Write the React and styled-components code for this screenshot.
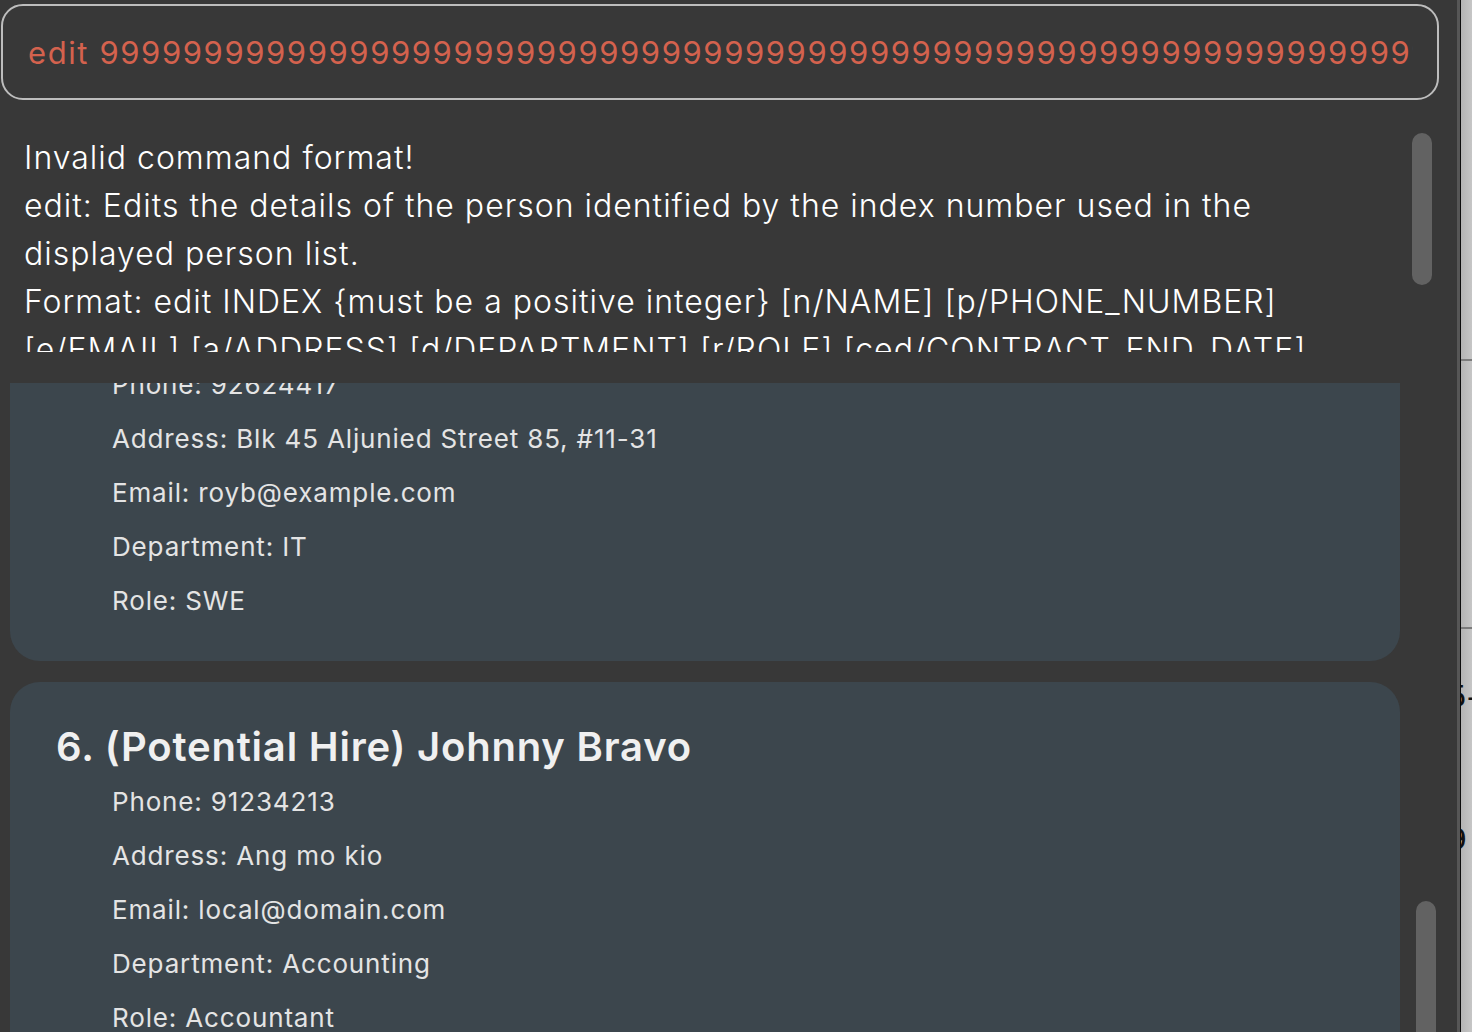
import { useEffect, useRef } from "react";
import styled, { createGlobalStyle } from "styled-components";

const GlobalStyle = createGlobalStyle`
  html, body {
    margin: 0;
    padding: 0;
    background: #383838;
    overflow: hidden;
  }
  * {
    box-sizing: border-box;
  }
`;

const Screen = styled.div`
  display: flex;
  width: 1472px;
  height: 1032px;
  overflow: hidden;
  font-family: "Inter", "Noto Sans", sans-serif;
`;

const Main = styled.div`
  width: 1460px;
  flex-shrink: 0;
  display: flex;
  flex-direction: column;
  background: #383838;
  border-right: 3px solid #565656;
`;

const CommandBox = styled.div`
  margin: 4px 18px 0 1px;
  height: 96px;
  border: 2px solid #bdbdbd;
  border-radius: 22px;
  padding: 0 24px 0 25px;
  display: flex;
  align-items: center;
  overflow: hidden;
`;

const CommandText = styled.div`
  color: #d4624e;
  font-size: 31px;
  letter-spacing: 1.6px;
  white-space: nowrap;
  overflow: hidden;
  width: 100%;
`;

const ResultWrap = styled.div`
  position: relative;
  margin-top: 34px;
  height: 218px;
  padding-left: 24px;
  padding-right: 60px;
`;

const ResultText = styled.div`
  height: 218px;
  overflow: hidden;
  color: #ffffff;
  font-size: 32px;
  font-weight: 300;
  letter-spacing: 1px;
  line-height: 48px;
`;

const Thumb = styled.div`
  position: absolute;
  width: 20px;
  border-radius: 10px;
  background: #626262;
  top: ${({ $top }) => $top}px;
  left: ${({ $left }) => $left}px;
  height: ${({ $height }) => $height}px;
`;

const ListWrap = styled.div`
  position: relative;
  margin-top: 31px;
  flex: 1;
  min-height: 0;
`;

const ListScroll = styled.div`
  height: 100%;
  overflow-y: scroll;
  padding: 0 57px 0 10px;
  scrollbar-width: none;
  &::-webkit-scrollbar {
    display: none;
  }
`;

const CardList = styled.div`
  display: flex;
  flex-direction: column;
  gap: 21px;
  padding-bottom: 21px;
`;

const Card = styled.div`
  background: #3c464d;
  border-radius: 30px;
  padding: 40px 46px 33px;
`;

const Title = styled.div`
  color: #f0f0f0;
  font-size: 40px;
  font-weight: 600;
  letter-spacing: 0.8px;
  line-height: 50px;
  margin-bottom: 3px;
`;

const Field = styled.div`
  color: #e4e4e4;
  font-size: 26px;
  letter-spacing: 0.85px;
  line-height: 54px;
  padding-left: 56px;
`;

const SidePanel = styled.div`
  flex: 1;
  position: relative;
  border-left: 1px solid #0d0d0d;
  background: linear-gradient(90deg, #b4b4b4, #c6c6c6);
  overflow: hidden;
  display: flex;
  flex-direction: column;
`;

const SideRule = styled.div`
  height: 2px;
  background: #7c7c7c;
  margin-top: ${({ $top }) => $top}px;
`;

const SideGlyph = styled.div`
  font-family: "DejaVu Sans", sans-serif;
  font-size: 30px;
  color: #111;
  line-height: 40px;
  margin-left: -13px;
  margin-top: ${({ $top }) => $top}px;
  white-space: nowrap;
`;

const people = [
  {
    title: "5. Roy Balakrishnan",
    phone: "92624417",
    address: "Blk 45 Aljunied Street 85, #11-31",
    email: "royb@example.com",
    department: "IT",
    role: "SWE",
  },
  {
    title: "6. (Potential Hire) Johnny Bravo",
    phone: "91234213",
    address: "Ang mo kio",
    email: "local@domain.com",
    department: "Accounting",
    role: "Accountant",
  },
  {
    title: "7. Alex Yeoh",
    phone: "87438807",
    address: "Blk 30 Geylang Street 29, #06-40",
    email: "alexyeoh@example.com",
    department: "HR",
    role: "Manager",
  },
];

const PersonCard = ({ person }) => (
  <Card>
    <Title>{person.title}</Title>
    <Field>Phone: {person.phone}</Field>
    <Field>Address: {person.address}</Field>
    <Field>Email: {person.email}</Field>
    <Field>Department: {person.department}</Field>
    <Field>Role: {person.role}</Field>
  </Card>
);

const App = () => {
  const listRef = useRef(null);

  useEffect(() => {
    if (listRef.current) listRef.current.scrollTop = 118;
  }, []);

  return (
    <Screen>
      <GlobalStyle />
      <Main>
        <CommandBox>
          <CommandText>edit {"9".repeat(80)}</CommandText>
        </CommandBox>
        <ResultWrap>
          <ResultText>
            Invalid command format!
            <br />
            edit: Edits the details of the person identified by the index number used in the displayed person list.
            <br />
            Format: edit INDEX {"{must be a positive integer}"} [n/NAME] [p/PHONE_NUMBER] [e/EMAIL] [a/ADDRESS] [d/DEPARTMENT] [r/ROLE] [ced/CONTRACT_END_DATE]
            <br />
            Example: edit 1 p/91234567 e/johndoe@example.com
          </ResultText>
          <Thumb $top={-1} $left={1412} $height={152} />
        </ResultWrap>
        <ListWrap>
          <ListScroll ref={listRef}>
            <CardList>
              {people.map((p) => (
                <PersonCard key={p.title} person={p} />
              ))}
            </CardList>
          </ListScroll>
          <Thumb $top={518} $left={1416} $height={220} />
        </ListWrap>
      </Main>
      <SidePanel>
        <SideRule $top={359} />
        <SideRule $top={266} />
        <SideGlyph $top={48}>5-</SideGlyph>
        <SideGlyph $top={103}>9</SideGlyph>
      </SidePanel>
    </Screen>
  );
};

export default App;
